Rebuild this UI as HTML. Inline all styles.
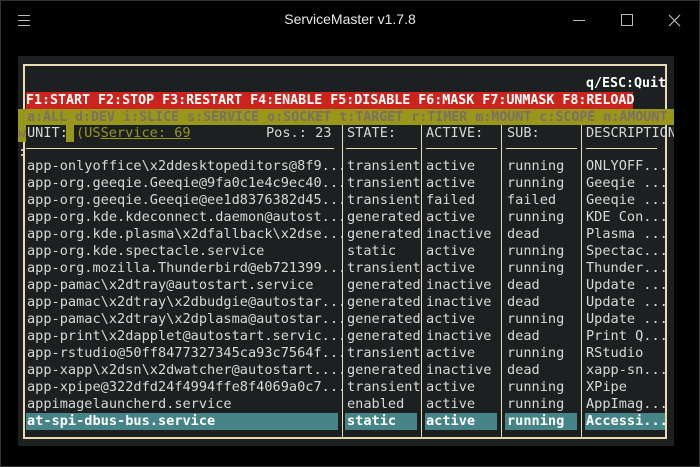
<!DOCTYPE html>
<html><head><style>
*{margin:0;padding:0;box-sizing:border-box}
body{width:700px;height:467px;background:#000;position:relative;overflow:hidden;font-family:"DejaVu Sans Mono","Liberation Mono",monospace;font-size:13.6px;color:#d8d8d8}
.t{position:absolute;white-space:pre;line-height:17px}
#term{position:absolute;left:18px;top:56px;width:656px;height:390px;background:#1d2021;overflow:hidden}
.ln{position:absolute;background:#ebdbb2}
.b{font-weight:bold}
</style></head><body>
<div style="position:absolute;left:0;top:0;width:700px;height:467px;border:1px solid #333"></div>
<div class="t" style="left:0;width:700px;top:11px;text-align:center;font-family:'Liberation Sans',sans-serif;font-size:14px;color:#e8e8e8">ServiceMaster v1.7.8</div>
<div style="position:absolute;left:18px;top:15px;width:12px;height:1px;background:#bbb;box-shadow:0 5px 0 #bbb,0 10px 0 #bbb"></div>
<div style="position:absolute;left:573px;top:20px;width:12px;height:1px;background:#bbb"></div>
<div style="position:absolute;left:621px;top:14px;width:12px;height:12px;border:1px solid #bbb"></div>
<svg style="position:absolute;left:668px;top:14px" width="13" height="13"><path d="M1 1L12 12M12 1L1 12" stroke="#bbb" stroke-width="1.2"/></svg>
<div id="term">
<div class="ln" style="left:5px;top:8px;width:644px;height:2px"></div>
<div class="ln" style="left:5px;top:8px;width:2px;height:375px"></div>
<div class="ln" style="left:647px;top:8px;width:2px;height:375px"></div>
<div class="ln" style="left:5px;top:381px;width:644px;height:2px"></div>
<div class="t b" style="left:568px;top:19px;color:#fff;font-size:13.3px">q/ESC:Quit</div>
<div class="t b" style="left:8px;top:36px;width:607px;height:17px;background:#cc241d;color:#fff;font-size:13.3px">F1:START F2:STOP F3:RESTART F4:ENABLE F5:DISABLE F6:MASK F7:UNMASK F8:RELOAD</div>
<div class="t b" style="left:0;top:53px;width:656px;height:16px;background:#98971a;color:#7c6f64;font-size:13.3px;padding-left:9px">a:ALL d:DEV i:SLICE s:SERVICE o:SOCKET t:TARGET r:TIMER m:MOUNT c:SCOPE n:AMOUNT</div>
<div class="t" style="left:0;top:69px;background:#98971a;color:#7c6f64;width:8px">w</div>
<div class="t" style="left:9px;top:69px">UNIT:</div>
<div style="position:absolute;left:48px;top:69px;width:8px;height:17px;background:#98971a"></div>
<div class="t" style="left:58px;top:69px;color:#98971a">(US<u>Service: 69</u></div>
<div class="t" style="left:248px;top:69px">Pos.: 23</div>
<div class="ln" style="left:324px;top:69px;width:1px;height:314px"></div>
<div class="ln" style="left:403px;top:69px;width:1px;height:314px"></div>
<div class="ln" style="left:483px;top:69px;width:1px;height:314px"></div>
<div class="ln" style="left:563px;top:69px;width:1px;height:314px"></div>
<div class="ln" style="left:8px;top:92px;width:308px;height:1px"></div>
<div class="ln" style="left:328px;top:92px;width:71px;height:1px"></div>
<div class="ln" style="left:408px;top:92px;width:71px;height:1px"></div>
<div class="ln" style="left:488px;top:92px;width:71px;height:1px"></div>
<div class="ln" style="left:568px;top:92px;width:71px;height:1px"></div>
<div class="t" style="left:0;top:88px">:</div>
<div class="t" style="left:329px;top:69px">STATE:</div>
<div class="t" style="left:408px;top:69px">ACTIVE:</div>
<div class="t" style="left:489px;top:69px">SUB:</div>
<div class="t" style="left:568px;top:69px">DESCRIPTION</div>
<div style="position:absolute;left:8px;top:357px;width:312px;height:17px;background:#458588"></div>
<div style="position:absolute;left:327px;top:357px;width:72px;height:17px;background:#458588"></div>
<div style="position:absolute;left:407px;top:357px;width:72px;height:17px;background:#458588"></div>
<div style="position:absolute;left:487px;top:357px;width:72px;height:17px;background:#458588"></div>
<div style="position:absolute;left:567px;top:357px;width:80px;height:17px;background:#458588"></div>
<div class="t" style="left:9px;top:102px">app-onlyoffice\x2ddesktopeditors@8f9...
app-org.geeqie.Geeqie@9fa0c1e4c9ec40...
app-org.geeqie.Geeqie@ee1d8376382d45...
app-org.kde.kdeconnect.daemon@autost...
app-org.kde.plasma\x2dfallback\x2dse...
app-org.kde.spectacle.service
app-org.mozilla.Thunderbird@eb721399...
app-pamac\x2dtray@autostart.service
app-pamac\x2dtray\x2dbudgie@autostar...
app-pamac\x2dtray\x2dplasma@autostar...
app-print\x2dapplet@autostart.servic...
app-rstudio@50ff8477327345ca93c7564f...
app-xapp\x2dsn\x2dwatcher@autostart....
app-xpipe@322dfd24f4994ffe8f4069a0c7...
appimagelauncherd.service
<b style="color:#fff">at-spi-dbus-bus.service</b></div>
<div class="t" style="left:329px;top:102px">transient
transient
transient
generated
generated
static
transient
generated
generated
generated
generated
transient
generated
transient
enabled
<b style="color:#fff">static</b></div>
<div class="t" style="left:408px;top:102px">active
active
failed
active
inactive
active
active
inactive
inactive
active
inactive
active
inactive
active
active
<b style="color:#fff">active</b></div>
<div class="t" style="left:489px;top:102px">running
running
failed
running
dead
running
running
dead
dead
running
dead
running
dead
running
running
<b style="color:#fff">running</b></div>
<div class="t" style="left:568px;top:102px">ONLYOFF...
Geeqie ...
Geeqie ...
KDE Con...
Plasma ...
Spectac...
Thunder...
Update ...
Update ...
Update ...
Print Q...
RStudio
xapp-sn...
XPipe
AppImag...
<b style="color:#fff">Accessi...</b></div>
</div>
</body></html>
